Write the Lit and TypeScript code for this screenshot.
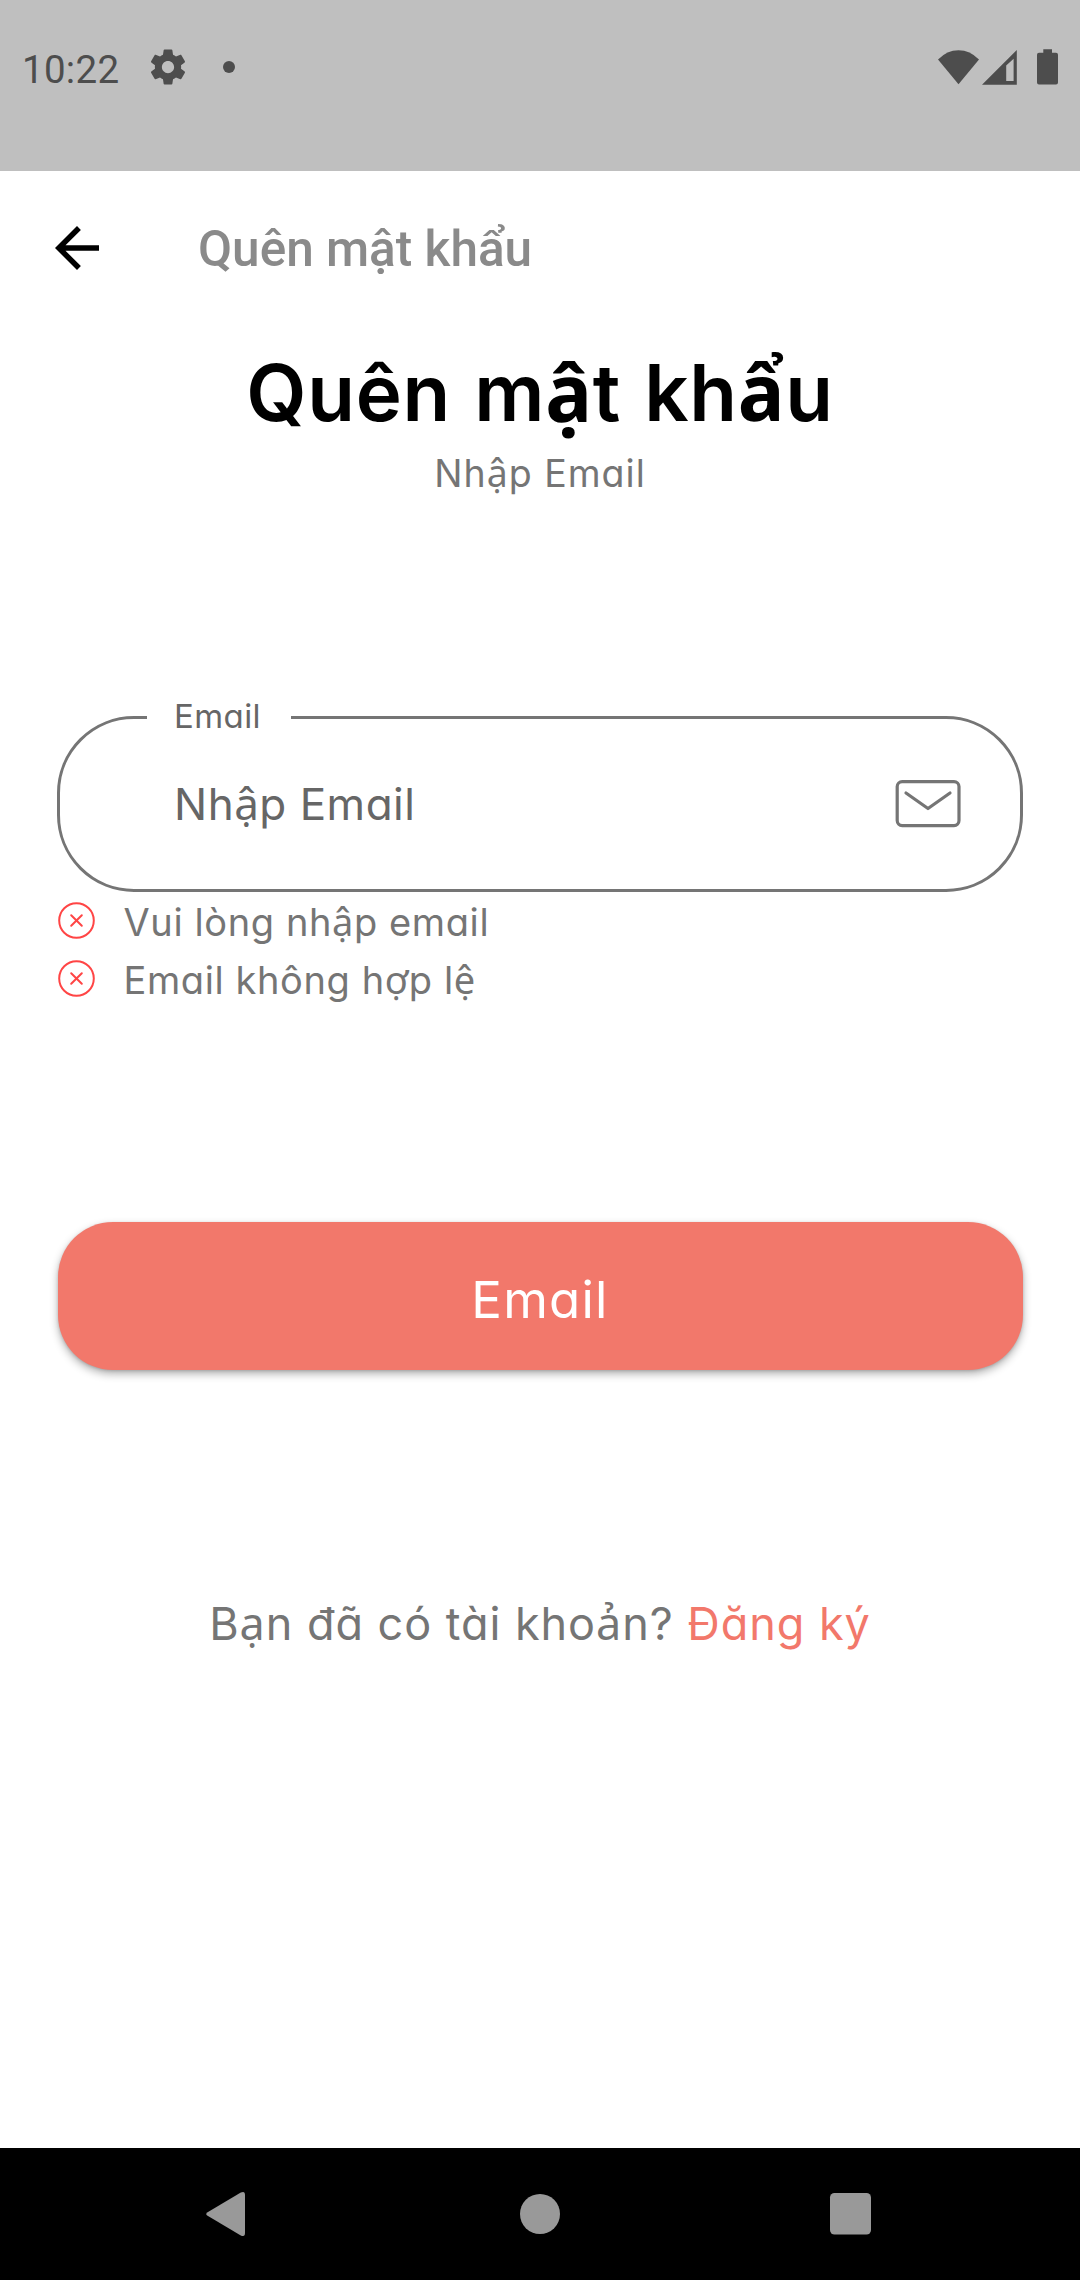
import { LitElement, html, css, svg } from "lit";
import { customElement } from "lit/decorators.js";

const fallbackLetters = /([ậẩạảợệ])/;

/** Splits a string so that stacked-accent letters use the secondary face. */
const mix = (text: string) =>
  text
    .split(fallbackLetters)
    .filter((part) => part !== "")
    .map((part) => (fallbackLetters.test(part) ? html`<span class="alt">${part}</span>` : part));

@customElement("app-root")
export class AppRoot extends LitElement {
  static styles = css`
    :host {
      display: flex;
      flex-direction: column;
      width: 1080px;
      height: 2280px;
      background: #fff;
      color: #757575;
      font-family: Inter, "Noto Sans", sans-serif;
      font-feature-settings: "cv11" 1, "calt" 0;
      overflow: hidden;
      white-space: nowrap;
    }
    * { box-sizing: border-box; }
    svg { display: block; flex: none; }
    .alt { font-family: "Noto Sans", sans-serif; line-height: 0; }

    .status {
      display: flex;
      justify-content: space-between;
      height: 171px;
      padding: 37px 19px 0 22px;
      background: #bfbfbf;
      color: #4d4d4d;
      fill: #4d4d4d;
    }
    .left, .right { display: flex; height: 60px; align-items: center; }
    .right { padding-top: 2px; }
    .clock { width: 125px; font: 38.5px/60px Roboto, sans-serif; padding-top: 5px; letter-spacing: 0.3px; }
    .dot { width: 12px; height: 12px; margin-left: 34px; border-radius: 50%; background: currentColor; }

    .bar { display: flex; align-items: center; height: 154px; padding-left: 44px; }
    .bar-title {
      margin: 0 0 0 88px;
      padding-top: 2px;
      font: 500 49.5px/66px Roboto, sans-serif;
      color: #8a8a8a;
    }

    main { display: flex; flex-direction: column; flex: 1; padding: 19px 57px 0; }
    h1 {
      margin: 0;
      text-align: center;
      font-size: 78px;
      line-height: 97px;
      font-weight: 600;
      letter-spacing: 0.7px;
      word-spacing: 3px;
      color: #000;
    }
    h1 .alt { font-weight: 700; }
    .sub { margin: 1px 0 0; text-align: center; font-size: 37.5px; line-height: 64px; letter-spacing: 1px; }

    .field {
      position: relative;
      display: flex;
      align-items: center;
      justify-content: space-between;
      height: 176px;
      margin-top: 210px;
      padding: 0 58.5px 0 114px;
      border: 3px solid #757575;
      border-radius: 77px;
    }
    .label {
      position: absolute;
      left: 87px;
      top: -23px;
      width: 144px;
      padding-left: 27px;
      background: #fff;
      font-size: 33px;
      line-height: 40px;
      letter-spacing: 0.4px;
      color: #666;
    }
    .value { font-size: 44px; line-height: 60px; letter-spacing: 0.5px; color: #666; }

    ul { margin: 0; padding: 0 0 0 0.5px; list-style: none; }
    li {
      display: flex;
      align-items: center;
      gap: 29px;
      height: 58px;
      font-size: 38px;
      line-height: 54px;
      letter-spacing: 0.6px;
    }
    li svg { margin-bottom: 2px; }
    .msg { padding-top: 2px; }

    .button {
      height: 148px;
      margin: 214px 0.5px 0;
      border: 0;
      border-radius: 55px;
      background: #f2786b;
      color: #fff;
      font: inherit;
      font-size: 51px;
      line-height: 144px;
      letter-spacing: 1.2px;
      padding: 6px 0 0;
      box-shadow: 0 4px 9px rgba(0, 0, 0, 0.3), 0 1px 3px rgba(0, 0, 0, 0.14);
    }
    .foot { margin: 221px 0 0; text-align: center; font-size: 45px; line-height: 66px; letter-spacing: 0.95px; }
    .link { color: #f2786b; }

    nav {
      display: flex;
      align-items: center;
      height: 132px;
      padding-left: 204px;
      background: #000;
      fill: #999;
    }
    .home { margin-left: 272px; }
    .recent { margin-left: 268px; }
  `;

  private cross() {
    return svg`<svg width="37" height="37" viewBox="0 0 37 37" fill="none" stroke="#ff4545" stroke-width="2" stroke-linecap="round">
      <circle cx="18.5" cy="18.5" r="17.3" />
      <path d="M13.2 13.2l10.6 10.6M23.8 13.2l-10.6 10.6" />
    </svg>`;
  }

  render() {
    return html`
      <header class="status">
        <div class="left">
          <span class="clock">10:22</span>
          <svg width="42" height="42" viewBox="0 0 24 24"><path d="M19.43 12.98c.04-.32.07-.64.07-.98s-.03-.66-.07-.98l2.11-1.65c.19-.15.24-.42.12-.64l-2-3.46c-.12-.22-.39-.3-.61-.22l-2.49 1c-.52-.4-1.08-.73-1.69-.98l-.38-2.65C14.46 2.18 14.25 2 14 2h-4c-.25 0-.46.18-.49.42l-.38 2.65c-.61.25-1.17.59-1.69.98l-2.49-1c-.23-.09-.49 0-.61.22l-2 3.46c-.13.22-.07.49.12.64l2.11 1.65c-.04.32-.07.65-.07.98s.03.66.07.98l-2.11 1.65c-.19.15-.24.42-.12.64l2 3.46c.12.22.39.3.61.22l2.49-1c.52.4 1.08.73 1.69.98l.38 2.65c.03.24.24.42.49.42h4c.25 0 .46-.18.49-.42l.38-2.65c.61-.25 1.17-.59 1.69-.98l2.49 1c.23.09.49 0 .61-.22l2-3.46c.12-.22.07-.49-.12-.64l-2.11-1.65zM12 15.5c-1.93 0-3.5-1.57-3.5-3.5s1.57-3.5 3.5-3.5 3.5 1.57 3.5 3.5-1.57 3.5-3.5 3.5z"/></svg>
          <span class="dot"></span>
        </div>
        <div class="right">
          <svg width="124" height="60" viewBox="937 38 124 60">
            <path d="M958.5 84.3L938 59.5Q947 50.2 958.5 50.2T979 59.5z" />
            <path fill-rule="evenodd" d="M982 84.8L1016.8 50V84.8zM1006.2 65.5V81H1013.6V58.8z" />
            <path d="M1043.3 52.7V49.2H1052V52.7H1056a2 2 0 0 1 2 2V82.5a2 2 0 0 1-2 2H1039a2 2 0 0 1-2-2V54.7a2 2 0 0 1 2-2z" />
          </svg>
        </div>
      </header>
      <div class="bar">
        <svg width="66" height="66" viewBox="0 0 24 24"><path d="M20 11H7.83l5.59-5.59L12 4l-8 8 8 8 1.41-1.41L7.83 13H20v-2z" /></svg>
        <p class="bar-title">Quên mật khẩu</p>
      </div>
      <main>
        <h1>${mix("Quên mật khẩu")}</h1>
        <p class="sub">${mix("Nhập Email")}</p>
        <div class="field">
          <span class="label">Email</span>
          <span class="value">${mix("Nhập Email")}</span>
          <svg width="67" height="50" viewBox="0 0 67 50" fill="none" stroke="#757575" stroke-width="3.2" stroke-linecap="round" stroke-linejoin="round">
            <rect x="2.2" y="2.6" width="61.8" height="44" rx="5" />
            <path d="M11 14L33 29.5L55 14" />
          </svg>
        </div>
        <ul>
          <li>${this.cross()}<span class="msg">${mix("Vui lòng nhập email")}</span></li>
          <li>${this.cross()}<span class="msg">${mix("Email không hợp lệ")}</span></li>
        </ul>
        <button class="button">Email</button>
        <p class="foot">${mix("Bạn đã có tài khoản?")} <span class="link">Đăng ký</span></p>
      </main>
      <nav>
        <svg width="44" height="48" viewBox="0 0 44 48"><path d="M3.6 22.2L36.8 2.6Q41 .6 41 5V43Q41 47.4 36.8 45.4L3.6 25.8Q.8 24 3.6 22.2z" /></svg>
        <svg class="home" width="40" height="40" viewBox="0 0 40 40"><circle cx="20" cy="20" r="20" /></svg>
        <svg class="recent" width="46" height="42" viewBox="0 0 46 42"><rect x="2" y="0" width="41" height="41.5" rx="4.5" /></svg>
      </nav>
    `;
  }
}
